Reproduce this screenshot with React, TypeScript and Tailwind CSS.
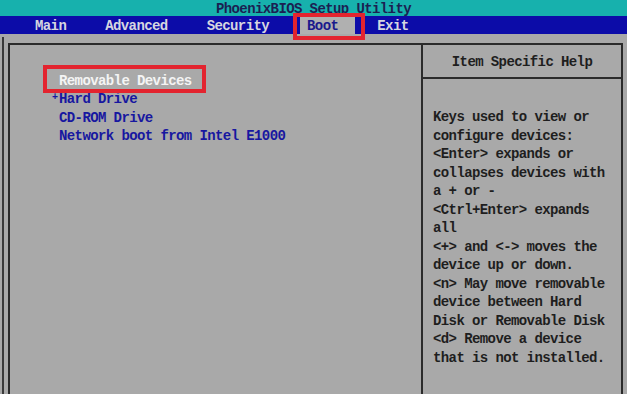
import React from 'react';

const bootItems = ['Hard Drive', 'CD-ROM Drive', 'Network boot from Intel E1000'];

const helpLines = [
  'Keys used to view or',
  'configure devices:',
  '<Enter> expands or',
  'collapses devices with',
  'a + or -',
  '<Ctrl+Enter> expands',
  'all',
  '<+> and <-> moves the',
  'device up or down.',
  '<n> May move removable',
  'device between Hard',
  'Disk or Removable Disk',
  '<d> Remove a device',
  'that is not installed.',
];

const App = () => {
  return (
    <div className="relative w-[627px] h-[394px] overflow-hidden bg-[#a9a9a9] font-['Liberation_Mono',monospace] font-bold text-[14px] tracking-[-0.6px]">
      {/* title bar */}
      <div className="h-[16px] bg-[#17b1ad] text-center leading-[18px] text-[#1b1f52] whitespace-pre overflow-hidden">
        PhoenixBIOS Setup Utility
      </div>

      {/* menu bar */}
      <div className="h-[18px] bg-[#0c0ca8] flex pl-[35px] leading-[20px] text-[#d6d6e0] whitespace-pre">
        <span>Main</span>
        <span className="ml-[39px]">Advanced</span>
        <span className="ml-[39px]">Security</span>
        <span className="ml-[31px] pl-[7px] pr-[17px] bg-[#b0b0b0] text-[#1a1a8c]">Boot</span>
        <span className="ml-[22px]">Exit</span>
      </div>

      {/* red marker round Boot */}
      <div className="absolute left-[293px] top-[13px] w-[72px] h-[27px] border-[4px] border-[#e3242f]" />

      {/* frame */}
      <div className="pt-[3px] pl-[2px]">
        <div className="border-l-2 border-[#3a3a3a] pl-[4px] pt-[6px]">
          <div className="flex w-[615px] h-[400px] border-l-2 border-t-2 border-r-2 border-[#2b2b2b]">
            {/* left panel */}
            <div className="relative w-[411px] pt-[27px] pl-[49px] leading-[18.3px] text-[#1717a0] whitespace-pre">
              <div className="text-[#f4f4f4]">Removable Devices</div>
              {bootItems.map((item, i) => (
                <div key={item} className="relative">
                  {i === 0 && (
                    <span className="absolute -left-[7px] top-[-1px] text-[10px]">+</span>
                  )}
                  {item}
                </div>
              ))}
              <div className="absolute left-[33px] top-[20px] w-[163px] h-[28px] border-[4px] border-[#e3242f]" />
            </div>

            {/* help panel */}
            <div className="flex-1 border-l-2 border-[#2b2b2b] text-[#1e1e1e]">
              <div className="h-[34px] pt-[3px] border-b-2 border-[#2b2b2b] flex items-center justify-center whitespace-pre">
                Item Specific Help
              </div>
              <div className="pt-[29px] pl-[10px] leading-[18.5px] whitespace-pre">
                {helpLines.map((line) => (
                  <div key={line}>{line}</div>
                ))}
              </div>
            </div>
          </div>
        </div>
      </div>
    </div>
  );
};

export default App;
